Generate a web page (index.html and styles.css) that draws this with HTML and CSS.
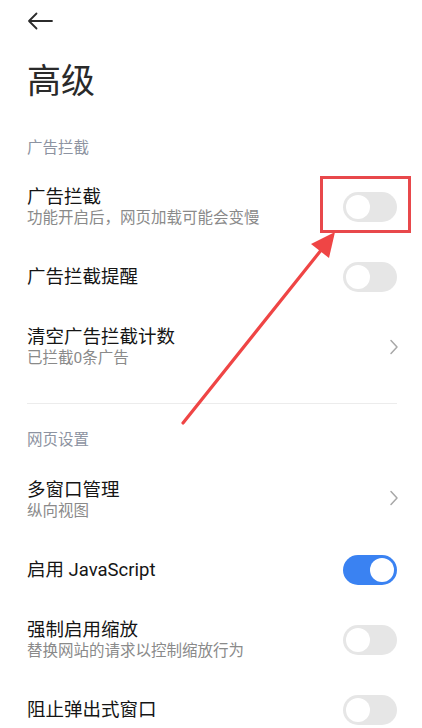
FILE: index.html
```html
<!DOCTYPE html>
<html lang="zh-CN">
<head>
<meta charset="utf-8">
<title>高级</title>
<link rel="stylesheet" href="styles.css">
</head>
<body>
<div class="page">
  <div class="topbar">
    <svg class="back" width="26" height="18" viewBox="0 0 26 18">
      <path d="M25 9H2M9.5 1.5L2 9l7.5 7.5" fill="none" stroke="#2b2b2b" stroke-width="1.8" stroke-linecap="round" stroke-linejoin="round"/>
    </svg>
  </div>
  <h1 class="title">高级</h1>

  <div class="section-label">广告拦截</div>

  <div class="row">
    <div class="texts">
      <div class="row-title">广告拦截</div>
      <div class="row-sub">功能开启后，网页加载可能会变慢</div>
    </div>
    <div class="switch"><span class="knob"></span></div>
  </div>
  <div class="row">
    <div class="texts">
      <div class="row-title">广告拦截提醒</div>
    </div>
    <div class="switch"><span class="knob"></span></div>
  </div>
  <div class="row">
    <div class="texts">
      <div class="row-title">清空广告拦截计数</div>
      <div class="row-sub">已拦截0条广告</div>
    </div>
    <svg class="chev" width="10" height="16" viewBox="0 0 10 16"><path d="M2 1.5l6 6.5-6 6.5" fill="none" stroke="#a8a8a8" stroke-width="1.5" stroke-linecap="round" stroke-linejoin="round"/></svg>
  </div>

  <div class="divider"></div>

  <div class="section-label second">网页设置</div>

  <div class="row">
    <div class="texts">
      <div class="row-title">多窗口管理</div>
      <div class="row-sub">纵向视图</div>
    </div>
    <svg class="chev up" width="10" height="16" viewBox="0 0 10 16"><path d="M2 1.5l6 6.5-6 6.5" fill="none" stroke="#a8a8a8" stroke-width="1.5" stroke-linecap="round" stroke-linejoin="round"/></svg>
  </div>
  <div class="row">
    <div class="texts">
      <div class="row-title">启用 JavaScript</div>
    </div>
    <div class="switch on"><span class="knob"></span></div>
  </div>
  <div class="row">
    <div class="texts">
      <div class="row-title">强制启用缩放</div>
      <div class="row-sub">替换网站的请求以控制缩放行为</div>
    </div>
    <div class="switch"><span class="knob"></span></div>
  </div>
  <div class="row">
    <div class="texts">
      <div class="row-title">阻止弹出式窗口</div>
    </div>
    <div class="switch"><span class="knob"></span></div>
  </div>

  <div class="highlight"></div>
  <svg class="annot" width="422" height="728" viewBox="0 0 422 728">
    <line x1="183" y1="423" x2="322" y2="249" stroke="#ef4545" stroke-width="3.2" stroke-linecap="round"/>
    <polygon points="335,232 311,244 329,258" fill="#ef4545"/>
  </svg>
</div>
</body>
</html>
```

FILE: styles.css
```css
html, body {
  margin: 0;
  padding: 0;
  background: #ffffff;
}

body {
  font-family: Roboto, "Noto Sans CJK SC", sans-serif;
  color: #1a1a1a;
}

.page {
  position: relative;
  width: 422px;
  height: 728px;
  overflow: hidden;
}

.topbar {
  height: 42px;
  display: flex;
  align-items: center;
  padding-left: 27px;
}

.back {
  display: block;
  margin-top: 0;
}

.title {
  margin: 0;
  padding-left: 27px;
  font-size: 34px;
  font-weight: normal;
  line-height: 78px;
  color: #2a2a2a;
}

.section-label {
  padding: 16px 0 12px 27px;
  font-size: 15.5px;
  line-height: 24px;
  color: #8d93a1;
}

.section-label.second {
  padding-top: 24px;
  padding-bottom: 13px;
}

.row {
  height: 70px;
  display: flex;
  align-items: center;
  justify-content: space-between;
  padding: 0 25px 0 27px;
}

.texts {
  display: flex;
  flex-direction: column;
}

.row-title {
  font-size: 18.5px;
  line-height: 22px;
  color: #151515;
}

.row-sub {
  font-size: 15.5px;
  line-height: 20px;
  color: #8a8a8a;
}

.switch {
  width: 54px;
  height: 30px;
  border-radius: 15px;
  background: #e6e6e6;
  display: flex;
  align-items: center;
  padding: 0 3px;
  box-sizing: border-box;
  flex-shrink: 0;
}

.knob {
  width: 24px;
  height: 24px;
  border-radius: 50%;
  background: #ffffff;
}

.switch.on {
  background: #3a82f2;
  justify-content: flex-end;
}

.chev {
  display: block;
  margin-right: -2px;
}

.chev.up {
  margin-top: -4px;
}

.divider {
  height: 1px;
  background: #ececec;
  margin: 21px 25px 0 27px;
}

.highlight {
  position: absolute;
  left: 320px;
  top: 176px;
  width: 91px;
  height: 57px;
  box-sizing: border-box;
  border: 3px solid #e8484b;
}

.annot {
  position: absolute;
  left: 0;
  top: 0;
  pointer-events: none;
}
```
